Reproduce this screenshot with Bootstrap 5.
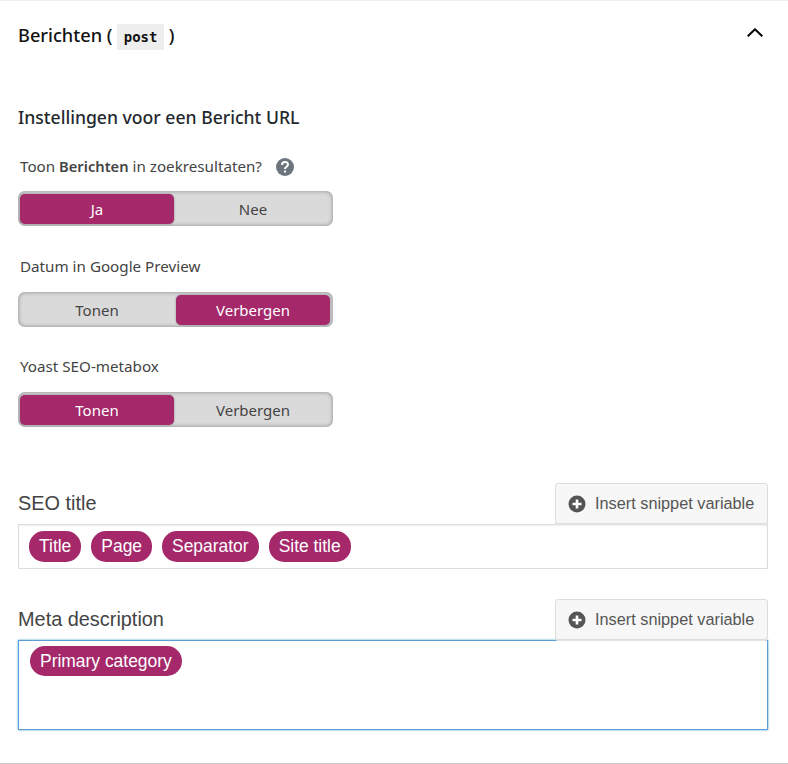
<!DOCTYPE html>
<html lang="nl">
<head>
    <meta charset="UTF-8">
    <meta name="viewport" content="width=device-width, initial-scale=1.0">
    <title>Berichten</title>
    <link href="https://cdn.jsdelivr.net/npm/bootstrap@5.3.0/dist/css/bootstrap.min.css" rel="stylesheet">
    <style>
        body {
            font-family: "Noto Sans", "Open Sans", sans-serif;
            color: #444;
            background: #fff;
        }
        .seo-panel {
            height: 764px;
            padding: 0 20px 0 18px;
            border-top: 1px solid #eee;
            border-bottom: 1px solid #ccc;
        }
        .panel-head {
            height: 70px;
        }
        .panel-title {
            font-size: 18.200px;
            font-weight: 500;
            color: #111;
            margin: 0;
        }
        .panel-title code {
            font-family: "DejaVu Sans Mono", monospace;
            font-size: 14px;
            font-weight: 700;
            color: #111;
            background: #eee;
            padding: 5px 6.500px;
        }
        .chevron {
            margin-right: 5px;
            margin-bottom: 7px;
        }
        .url-heading {
            font-size: 17.600px;
            font-weight: 500;
            line-height: 24px;
            color: #23282d;
            margin: 34px 0 0;
        }
        .field-label {
            font-size: 15.200px;
            line-height: 18px;
            color: #444;
            padding-left: 2px;
            height: 20px;
        }
        .field-label strong {
            font-size: 14.700px;
        }
        .first-label {
            margin-top: 28px;
        }
        .help-mark {
            margin-left: 14px;
            margin-top: 1px;
        }
        .toggle-box {
            width: 315px;
            height: 35px;
            margin-top: 15px;
            margin-bottom: 30px;
            padding: 3px 3px 2px 2px;
            gap: 2px;
            background: #dadada;
            border-radius: 7px;
            box-shadow: inset 0 0 4px rgba(0, 0, 0, .38);
        }
        .first-label + .toggle-box {
            margin-top: 14px;
            margin-bottom: 31px;
        }
        .toggle-part {
            flex: 1 1 50%;
            font-size: 15px;
            text-align: center;
            line-height: 31px;
            color: #444;
        }
        .toggle-part.is-on {
            background: #a4286a;
            color: #fff;
            border-radius: 5px;
            box-shadow: 0 0 2px rgba(0, 0, 0, .4);
        }
        .editor-block {
            font-family: "Liberation Sans", Arial, sans-serif;
        }
        .first-editor {
            margin-top: 56px;
        }
        .second-editor {
            margin-top: 30px;
        }
        .editor-label {
            font-size: 19.900px;
            color: #444;
        }
        .insert-btn {
            font-family: "Liberation Sans", Arial, sans-serif;
            font-size: 16.300px;
            color: #555;
            background: #f7f7f7;
            border: 1px solid #ddd;
            border-radius: 3px;
            height: 41px;
            width: 213px;
            padding: 0 0 0 12px;
            gap: 9px;
            box-shadow: 0 1px 0 #e4e4e4;
        }
        .insert-btn:hover {
            background: #f7f7f7;
            color: #555;
            border-color: #ddd;
        }
        .snippet-input {
            height: 45px;
            padding: 6px 10px;
            gap: 10px;
            border: 1px solid #ddd;
            box-shadow: inset 0 1px 2px rgba(0, 0, 0, .07);
        }
        .snippet-input.is-focused {
            height: 90px;
            padding: 5px 11px;
            border-color: #5b9dd9;
            box-shadow: 0 0 2px rgba(30, 140, 190, .8);
        }
        .snippet-pill {
            font-size: 17.450px;
            line-height: 30px;
            color: #fff;
            background: #a4286a;
            border-radius: 15px;
            padding: 0 10px;
        }
    </style>
</head>
<body>
    <div class="seo-panel">
        <div class="panel-head d-flex justify-content-between align-items-center">
            <h2 class="panel-title">Berichten ( <code>post</code> )</h2>
            <svg class="chevron" width="16" height="9" viewBox="0 0 16 9" fill="none" stroke="#000" stroke-width="2">
                <path d="M.7 8.300 8 1.300l7.300 7"/>
            </svg>
        </div>

        <h3 class="url-heading">Instellingen voor een Bericht URL</h3>

        <div class="field-label first-label d-flex align-items-start">
            <span>Toon <strong class="fw-semibold">Berichten</strong> in zoekresultaten?</span>
            <svg class="help-mark" width="18" height="18" viewBox="0 0 18 18">
                <circle cx="9" cy="9" r="9" fill="#6c757d"/>
                <path d="M6 7c0-4 6-4 6-.4 0 2.200-3 2.200-3 4.400" fill="none" stroke="#fff" stroke-width="2"/>
                <rect x="8" y="12.500" width="2" height="2" fill="#fff"/>
            </svg>
        </div>
        <div class="toggle-box d-flex">
            <div class="toggle-part is-on">Ja</div>
            <div class="toggle-part">Nee</div>
        </div>

        <div class="field-label">Datum in Google Preview</div>
        <div class="toggle-box d-flex">
            <div class="toggle-part">Tonen</div>
            <div class="toggle-part is-on">Verbergen</div>
        </div>

        <div class="field-label">Yoast SEO-metabox</div>
        <div class="toggle-box d-flex">
            <div class="toggle-part is-on">Tonen</div>
            <div class="toggle-part">Verbergen</div>
        </div>

        <div class="editor-block first-editor">
            <div class="d-flex justify-content-between align-items-center">
                <span class="editor-label">SEO title</span>
                <button type="button" class="btn insert-btn d-flex align-items-center">
                    <svg width="18" height="18" viewBox="0 0 18 18">
                        <circle cx="9" cy="9" r="8.500" fill="#555"/>
                        <path d="M9 4.500v9M4.500 9h9" stroke="#fff" stroke-width="2.600"/>
                    </svg>
                    <span>Insert snippet variable</span>
                </button>
            </div>
            <div class="snippet-input d-flex">
                <span class="snippet-pill">Title</span>
                <span class="snippet-pill">Page</span>
                <span class="snippet-pill">Separator</span>
                <span class="snippet-pill">Site title</span>
            </div>
        </div>

        <div class="editor-block second-editor">
            <div class="d-flex justify-content-between align-items-center">
                <span class="editor-label">Meta description</span>
                <button type="button" class="btn insert-btn d-flex align-items-center">
                    <svg width="18" height="18" viewBox="0 0 18 18">
                        <circle cx="9" cy="9" r="8.500" fill="#555"/>
                        <path d="M9 4.500v9M4.500 9h9" stroke="#fff" stroke-width="2.600"/>
                    </svg>
                    <span>Insert snippet variable</span>
                </button>
            </div>
            <div class="snippet-input is-focused d-flex align-items-start">
                <span class="snippet-pill">Primary category</span>
            </div>
        </div>
    </div>

    <script src="https://cdn.jsdelivr.net/npm/bootstrap@5.3.0/dist/js/bootstrap.bundle.min.js"></script>
</body>
</html>
